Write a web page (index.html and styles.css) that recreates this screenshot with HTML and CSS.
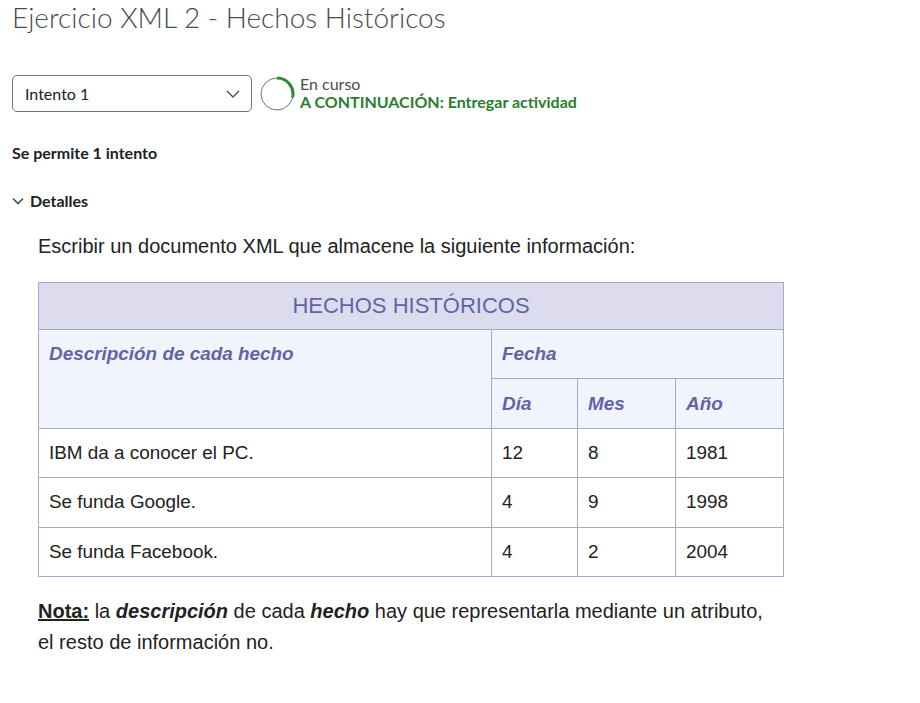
FILE: index.html
```
<!DOCTYPE html>
<html lang="es">
<head>
<meta charset="utf-8">
<title>Ejercicio XML 2 - Hechos Históricos</title>
<link rel="stylesheet" href="styles.css">
</head>
<body>
<h1 class="title">Ejercicio XML 2 - Hechos Históricos</h1>

<div class="attempt-row">
  <div class="select">
    <span>Intento 1</span>
    <svg class="select-chev" width="14" height="8" viewBox="0 0 14 8"><path d="M1 1l6 6 6-6" fill="none" stroke="#494c4e" stroke-width="1.3"/></svg>
  </div>
  <svg class="progress" width="36" height="36" viewBox="0 0 36 36">
    <circle cx="18" cy="18" r="16" fill="none" stroke="#6e7376" stroke-width="1"/>
    <path d="M18 2 A16 16 0 0 1 33.6 21.5" fill="none" stroke="#2e8b35" stroke-width="3"/>
  </svg>
  <div class="status">
    <div class="status-top">En curso</div>
    <div class="status-next">A CONTINUACIÓN: Entregar actividad</div>
  </div>
</div>

<p class="allowed">Se permite 1 intento</p>

<div class="details">
  <svg width="12" height="8" viewBox="0 0 12 8"><path d="M1 1.5l5 5 5-5" fill="none" stroke="#494c4e" stroke-width="1.6"/></svg>
  <span>Detalles</span>
</div>

<div class="content">
  <p class="intro">Escribir un documento XML que almacene la siguiente información:</p>
  <table class="facts">
    <colgroup>
      <col class="c1"><col class="c2"><col class="c3"><col class="c4">
    </colgroup>
    <tr><th colspan="4" class="caption">HECHOS HISTÓRICOS</th></tr>
    <tr>
      <th rowspan="2" class="sub top">Descripción de cada hecho</th>
      <th colspan="3" class="sub">Fecha</th>
    </tr>
    <tr><th class="sub">Día</th><th class="sub">Mes</th><th class="sub">Año</th></tr>
    <tr><td>IBM da a conocer el PC.</td><td>12</td><td>8</td><td>1981</td></tr>
    <tr><td>Se funda Google.</td><td>4</td><td>9</td><td>1998</td></tr>
    <tr><td>Se funda Facebook.</td><td>4</td><td>2</td><td>2004</td></tr>
  </table>
  <p class="note"><strong class="u">Nota:</strong> la <strong><em>descripción</em></strong> de cada <strong><em>hecho</em></strong> hay que representarla mediante un atributo,<br>el resto de información no.</p>
</div>
</body>
</html>
```
FILE: styles.css
```
html, body { margin: 0; padding: 0; background: #fff; }
body { font-family: Lato, "Noto Sans", sans-serif; color: #494c4e; padding: 0 12px; }

.title {
  margin: 0;
  font-weight: 300;
  font-size: 28px;
  line-height: 34px;
  color: #494c4e;
}

.attempt-row { display: flex; align-items: center; margin-top: 41px; height: 37px; }
.select {
  box-sizing: border-box;
  width: 240px; height: 37px;
  border: 1px solid #6e7376;
  border-radius: 5px;
  display: flex; align-items: center; justify-content: space-between;
  padding: 0 11px 0 12px;
  font-size: 16px;
  color: #202122;
}
.progress { margin-left: 7px; flex: none; }
.status { margin-left: 5px; font-size: 16px; line-height: 18px; margin-top: -2px; }
.status-top { color: #494c4e; }
.status-next { color: #2a7d2d; font-weight: 700; }

.allowed { margin: 31px 0 0; font-size: 16px; font-weight: 700; line-height: 20px; color: #202122; }

.details { display: flex; align-items: center; gap: 6px; margin-top: 28px; font-size: 16px; font-weight: 700; line-height: 20px; color: #202122; }

.content { padding-left: 26px; font-family: "Liberation Sans", Arial, sans-serif; color: #222; }
.intro { margin: 23px 0 0; font-size: 20px; line-height: 24px; }

.facts {
  margin-top: 24px;
  border-collapse: collapse;
  width: 746px;
  font-size: 18.9px;
  color: #222;
}
.c1 { width: 453px; } .c2 { width: 86px; } .c3 { width: 98px; } .c4 { width: 108px; }
.facts th, .facts td {
  border: 1px solid #a9a8cc;
  text-align: left;
  padding: 0 10px;
  height: 49.4px;
  box-sizing: border-box;
}
.facts .caption {
  background: #dcdcee;
  text-align: center;
  font-weight: 400;
  font-size: 22px;
  color: #6264a7;
  height: 47px;
}
.facts .sub {
  background: #f1f3fd;
  color: #6264a7;
  font-style: italic;
  font-weight: 700;
}
.facts .top { vertical-align: top; padding-top: 13px; }

.note { margin: 19px 0 0; font-size: 20px; line-height: 31px; color: #222; }
.u { text-decoration: underline; }
```
